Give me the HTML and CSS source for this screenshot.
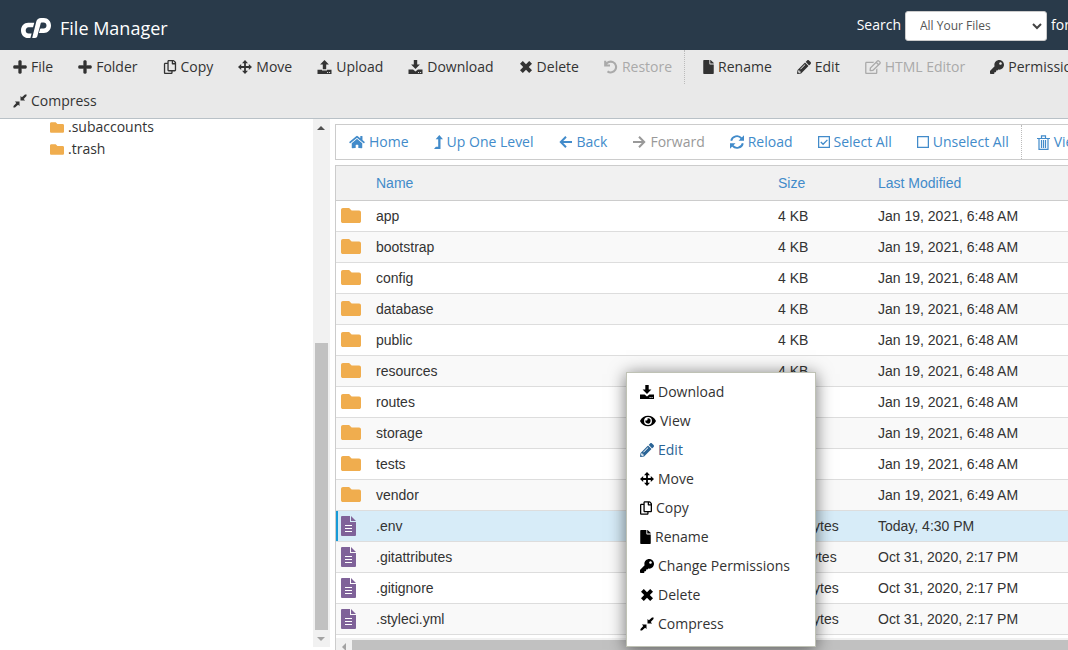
FILE: index.html
```html
<!DOCTYPE html>
<html lang="en">
<head>
<meta charset="utf-8">
<title>File Manager</title>
<link rel="stylesheet" href="styles.css">
</head>
<body>
<svg class="sprite" aria-hidden="true">
  <symbol id="plus" viewBox="-16 16 480 480"><path d="M416 208H272V64c0-17.67-14.33-32-32-32h-32c-17.67 0-32 14.33-32 32v144H32c-17.67 0-32 14.33-32 32v32c0 17.67 14.33 32 32 32h144v144c0 17.67 14.33 32 32 32h32c17.67 0 32-14.33 32-32V304h144c17.67 0 32-14.33 32-32v-32c0-17.67-14.33-32-32-32z" stroke="currentColor" stroke-width="16"/></symbol>
  <symbol id="copy" viewBox="0 0 448 512"><path d="M433.941 65.941l-51.882-51.882A48 48 0 0 0 348.118 0H176c-26.51 0-48 21.49-48 48v48H48c-26.51 0-48 21.49-48 48v320c0 26.51 21.49 48 48 48h224c26.51 0 48-21.49 48-48v-48h80c26.51 0 48-21.49 48-48V99.882a48 48 0 0 0-14.059-33.941zM266 464H54a6 6 0 0 1-6-6V150a6 6 0 0 1 6-6h74v224c0 26.51 21.49 48 48 48h96v42a6 6 0 0 1-6 6zm128-96H182a6 6 0 0 1-6-6V54a6 6 0 0 1 6-6h106v88c0 13.255 10.745 24 24 24h88v202a6 6 0 0 1-6 6zm6-256h-64V48h9.632c1.591 0 3.117.632 4.243 1.757l48.368 48.368a6 6 0 0 1 1.757 4.243V112z"/></symbol>
  <symbol id="move" viewBox="0 0 14 14"><path d="M7 0l3 3.2H7.9v2.9h2.9V4L14 7l-3.2 3V7.9H7.9v2.9H10L7 14l-3-3.2h2.1V7.9H3.2V10L0 7l3.2-3v2.1h2.9V3.2H4z"/></symbol>
  <symbol id="upload" viewBox="0 0 14 14"><path d="M7 0l4.400 4.600H8.700v4.700H5.300V4.600H2.600zM0 9.800h4.500v.8h5v-.8H14V14H0zM9.600 12v1h1v-1zm2 0v1h1v-1z" fill-rule="evenodd"/></symbol>
  <symbol id="download" viewBox="0 0 14 14"><path d="M5.300 0h3.400v4.400h2.700L7 9 2.600 4.400h2.700zM0 9.400h4.600L7 11.400l2.400-2H14V14H0zM9.600 12v1h1v-1zm2 0v1h1v-1z" fill-rule="evenodd"/></symbol>
  <symbol id="delete" viewBox="0 0 14 14"><path d="M1 3.800L3.800 1 7 4.200 10.200 1 13 3.800 9.800 7l3.200 3.200-2.800 2.800L7 9.800 3.800 13 1 10.200 4.200 7z"/></symbol>
  <symbol id="restore" viewBox="0 0 14 14"><path d="M1.200 .8v4.700H6M1.600 5.200A5.400 5.400 0 1 1 3.500 11.400" fill="none" stroke="currentColor" stroke-width="2.100"/></symbol>
  <symbol id="file" viewBox="0 0 384 512"><path d="M224 136V0H24C10.700 0 0 10.700 0 24v464c0 13.300 10.700 24 24 24h336c13.300 0 24-10.700 24-24V160H248c-13.200 0-24-10.800-24-24zm160-14.100v6.100H256V0h6.100c6.400 0 12.500 2.500 17 7l97.900 98c4.500 4.500 7 10.600 7 16.900z"/></symbol>
  <symbol id="doc" viewBox="0 0 15 20"><path d="M1 0h8v6h6v13a1 1 0 0 1-1 1H1a1 1 0 0 1-1-1V1a1 1 0 0 1 1-1zm9 0l5 5h-5z"/><path d="M4 9.500h7M4 12.500h7M4 15.500h7" stroke="#fff" stroke-width="1"/></symbol>
  <symbol id="pencil" viewBox="0 0 512 512"><path fill-rule="evenodd" d="M497.900 142.100l-46.100 46.100c-4.700 4.700-12.300 4.700-17 0l-111-111c-4.700-4.700-4.700-12.300 0-17l46.100-46.100c18.700-18.700 49.100-18.700 67.900 0l60.100 60.100c18.800 18.700 18.800 49.100 0 67.900zM284.200 99.800L21.600 362.400.4 483.900c-2.900 16.400 11.400 30.600 27.800 27.800l121.500-21.300 262.600-262.600c4.700-4.700 4.700-12.300 0-17l-111-111c-4.800-4.700-12.400-4.700-17.100 0zM124.100 339.900c-5.500-5.500-5.500-14.300 0-19.800l154-154c5.500-5.500 14.300-5.500 19.800 0s5.500 14.300 0 19.800l-154 154c-5.500 5.500-14.300 5.500-19.800 0zM88 424h48v36.300l-64.500 11.300-31.100-31.100L51.700 376H88v48z"/></symbol>
  <symbol id="edit" viewBox="0 0 576 512"><path d="M402.300 344.900l32-32c5-5 13.700-1.500 13.700 5.700V464c0 26.500-21.500 48-48 48H48c-26.500 0-48-21.500-48-48V112c0-26.500 21.500-48 48-48h273.500c7.100 0 10.700 8.600 5.700 13.700l-32 32c-1.500 1.500-3.500 2.300-5.700 2.300H48v352h352V350.500c0-2.100.8-4.100 2.300-5.600zm156.600-201.800L296.300 405.700l-90.400 10c-26.200 2.900-48.500-19.200-45.600-45.600l10-90.400L432.900 17.100c22.900-22.900 59.900-22.900 82.700 0l43.200 43.200c22.900 22.900 22.900 60 .1 82.800zM460.100 174L402 115.900 216.200 301.800l-7.300 65.300 65.300-7.300L460.100 174zm64.800-79.700l-43.200-43.200c-4.100-4.100-10.800-4.100-14.800 0L436 82l58.100 58.100 30.900-30.900c4-4.200 4-10.800-.1-14.900z"/></symbol>
  <symbol id="key" viewBox="0 0 512 512"><path d="M512 176.001C512 273.203 433.202 352 336 352c-11.220 0-22.190-1.062-32.827-3.069l-24.012 27.014A23.999 23.999 0 0 1 261.223 384H224v40c0 13.255-10.745 24-24 24h-40v40c0 13.255-10.745 24-24 24H24c-13.255 0-24-10.745-24-24v-78.059c0-6.365 2.529-12.470 7.029-16.971l161.802-161.802C163.108 213.814 160 195.271 160 176 160 78.798 238.797.001 335.999 0 433.488-.001 512 78.511 512 176.001zM336 128c0 26.510 21.490 48 48 48s48-21.490 48-48-21.490-48-48-48-48 21.490-48 48z"/></symbol>
  <symbol id="compress" viewBox="0 0 14 14"><path d="M7.500 1.900v4.600h4.600l-1.400-1.400L13.500 2l.1-1.500L12 .4 8.900 3.300zM6.500 12.100V7.500H1.900l1.400 1.400L.5 12l-.1 1.500 1.600.1 3.100-2.900z"/></symbol>
  <symbol id="folder" viewBox="0 64 512 384"><path d="M464 128H272l-64-64H48C21.490 64 0 85.490 0 112v288c0 26.510 21.490 48 48 48h416c26.510 0 48-21.490 48-48V176c0-26.510-21.490-48-48-48z"/></symbol>
  <symbol id="home" viewBox="0 0 576 512"><path d="M280.370 148.260L96 300.110V464a16 16 0 0 0 16 16l112.060-.29a16 16 0 0 0 15.920-16V368a16 16 0 0 1 16-16h64a16 16 0 0 1 16 16v95.640a16 16 0 0 0 16 16.050L464 480a16 16 0 0 0 16-16V300L295.670 148.260a12.190 12.190 0 0 0-15.300 0zM571.600 251.470L488 182.560V44.050a12 12 0 0 0-12-12h-56a12 12 0 0 0-12 12v72.610L318.470 43a48 48 0 0 0-61 0L4.340 251.470a12 12 0 0 0-1.600 16.900l25.500 31A12 12 0 0 0 45.150 301l235.220-193.740a12.190 12.190 0 0 1 15.300 0L530.900 301a12 12 0 0 0 16.900-1.600l25.500-31a12 12 0 0 0-1.700-16.930z"/></symbol>
  <symbol id="up" viewBox="0 0 9 14"><path d="M5.300 0L9 4.300H6.500V14H0l1.900-2.200h2.300V4.300H1.700z"/></symbol>
  <symbol id="back" viewBox="0 0 14 14"><path d="M7 1.800L1.800 7 7 12.200M2 7h11" fill="none" stroke="currentColor" stroke-width="2"/></symbol>
  <symbol id="forward" viewBox="0 0 14 14"><path d="M7 1.800L12.200 7 7 12.200M12 7H1" fill="none" stroke="currentColor" stroke-width="2"/></symbol>
  <symbol id="reload" viewBox="0 0 14 14"><path d="M1.200 5.800A5.900 5.900 0 0 1 11.500 3.300M12.800 8.200A5.900 5.900 0 0 1 2.500 10.700" fill="none" stroke="currentColor" stroke-width="1.900"/><path d="M14 .3v5.500H8.500zM0 13.700V8.200h5.500z"/></symbol>
  <symbol id="checked" viewBox="0 0 12 12"><path d="M.6 .6h10.800v10.800H.6zM2.800 6l2.300 2.300 4.300-4.400" fill="none" stroke="currentColor" stroke-width="1.300"/></symbol>
  <symbol id="unchecked" viewBox="0 0 12 12"><path d="M.6 .6h10.800v10.800H.6z" fill="none" stroke="currentColor" stroke-width="1.300"/></symbol>
  <symbol id="trash" viewBox="0 0 13 15"><path d="M0 3.500h13M4.500 3V.8h4V3M2 4v10.300h9V4M4.500 5v8M6.500 5v8M8.500 5v8" fill="none" stroke="currentColor" stroke-width="1.200"/></symbol>
  <symbol id="eye" viewBox="0 0 576 512"><path d="M572.520 241.400C518.290 135.590 410.930 64 288 64S57.680 135.640 3.480 241.410a32.350 32.350 0 0 0 0 29.190C57.710 376.410 165.070 448 288 448s230.320-71.640 284.520-177.410a32.350 32.350 0 0 0 0-29.190zM288 400a144 144 0 1 1 144-144 143.930 143.930 0 0 1-144 144zm0-240a95.310 95.310 0 0 0-25.310 3.790 47.850 47.850 0 0 1-66.900 66.900A95.780 95.780 0 1 0 288 160z"/></symbol>
</svg>

<header class="header">
  <svg class="logo" viewBox="0 0 30 20" role="img" aria-label="cPanel"><path d="M13.300 4.800H7.200C3 4.800 0 8.200 0 12.400 0 16.700 3 20 7.200 20h2.200l1.200-4.500H7.600c-1.700 0-2.900-1.300-2.900-3.100 0-1.700 1.200-3.100 2.900-3.100h3.800c.4 0 .7-.2.800-.6zM11.200 20L15.300 3.500C15.900 1.300 17.700 0 19.900 0h3C27 0 30 3.300 30 7.500S27 15 22.900 15h-5l1.100-3.800c.1-.5.500-.7.900-.7h2.700c1.700 0 2.900-1.300 2.900-3s-1.200-3-2.900-3h-2c-.4 0-.7.200-.8.600L16.300 18.300c-.3 1.100-1.100 1.700-2.200 1.700z"/></svg>
  <h1 class="title">File Manager</h1>
  <form class="search">
    <label for="scope">Search</label>
    <select id="scope" class="scope"><option>All Your Files</option></select>
    <span class="search-for">for</span>
  </form>
</header>

<div class="toolbar">
  <div class="tools">
    <button class="tool"><svg class="icon"><use href="#plus"/></svg>File</button>
    <button class="tool"><svg class="icon"><use href="#plus"/></svg>Folder</button>
    <button class="tool"><svg class="icon"><use href="#copy"/></svg>Copy</button>
    <button class="tool"><svg class="icon"><use href="#move"/></svg>Move</button>
    <button class="tool"><svg class="icon tray"><use href="#upload"/></svg>Upload</button>
    <button class="tool"><svg class="icon tray"><use href="#download"/></svg>Download</button>
    <button class="tool"><svg class="icon"><use href="#delete"/></svg>Delete</button>
    <button class="tool" disabled><svg class="icon"><use href="#restore"/></svg>Restore</button>
    <button class="tool divided"><svg class="icon narrow"><use href="#file"/></svg>Rename</button>
    <button class="tool"><svg class="icon"><use href="#pencil"/></svg>Edit</button>
    <button class="tool" disabled><svg class="icon wide"><use href="#edit"/></svg>HTML Editor</button>
    <button class="tool"><svg class="icon"><use href="#key"/></svg>Permissions</button>
  </div>
  <div class="tools">
    <button class="tool"><svg class="icon"><use href="#compress"/></svg>Compress</button>
  </div>
</div>

<main class="main">
  <aside class="sidebar">
    <ul class="tree">
      <li><svg class="tree-icon"><use href="#folder"/></svg>.subaccounts</li>
      <li><svg class="tree-icon"><use href="#folder"/></svg>.trash</li>
    </ul>
    <div class="vscroll" aria-hidden="true">
      <span class="arrow arrow-up"></span>
      <div class="vtrack"><div class="vthumb"></div></div>
      <span class="arrow arrow-down"></span>
    </div>
  </aside>

  <section class="content">
    <nav class="tools nav">
      <button class="tool"><svg class="icon wide"><use href="#home"/></svg>Home</button>
      <button class="tool"><svg class="icon slim"><use href="#up"/></svg>Up One Level</button>
      <button class="tool"><svg class="icon"><use href="#back"/></svg>Back</button>
      <button class="tool" disabled><svg class="icon"><use href="#forward"/></svg>Forward</button>
      <button class="tool"><svg class="icon"><use href="#reload"/></svg>Reload</button>
      <button class="tool"><svg class="icon box"><use href="#checked"/></svg>Select All</button>
      <button class="tool"><svg class="icon box"><use href="#unchecked"/></svg>Unselect All</button>
      <button class="tool divided"><svg class="icon trash"><use href="#trash"/></svg>View Trash</button>
    </nav>

    <div class="files">
      <table class="table">
        <colgroup><col class="col-icon"><col class="col-name"><col class="col-size"><col></colgroup>
        <thead><tr><th></th><th>Name</th><th>Size</th><th>Last Modified</th></tr></thead>
        <tbody>
          <tr><td><svg class="folder"><use href="#folder"/></svg></td><td>app</td><td>4 KB</td><td>Jan 19, 2021, 6:48 AM</td></tr>
          <tr><td><svg class="folder"><use href="#folder"/></svg></td><td>bootstrap</td><td>4 KB</td><td>Jan 19, 2021, 6:48 AM</td></tr>
          <tr><td><svg class="folder"><use href="#folder"/></svg></td><td>config</td><td>4 KB</td><td>Jan 19, 2021, 6:48 AM</td></tr>
          <tr><td><svg class="folder"><use href="#folder"/></svg></td><td>database</td><td>4 KB</td><td>Jan 19, 2021, 6:48 AM</td></tr>
          <tr><td><svg class="folder"><use href="#folder"/></svg></td><td>public</td><td>4 KB</td><td>Jan 19, 2021, 6:48 AM</td></tr>
          <tr><td><svg class="folder"><use href="#folder"/></svg></td><td>resources</td><td>4 KB</td><td>Jan 19, 2021, 6:48 AM</td></tr>
          <tr><td><svg class="folder"><use href="#folder"/></svg></td><td>routes</td><td>4 KB</td><td>Jan 19, 2021, 6:48 AM</td></tr>
          <tr><td><svg class="folder"><use href="#folder"/></svg></td><td>storage</td><td>4 KB</td><td>Jan 19, 2021, 6:48 AM</td></tr>
          <tr><td><svg class="folder"><use href="#folder"/></svg></td><td>tests</td><td>4 KB</td><td>Jan 19, 2021, 6:48 AM</td></tr>
          <tr><td><svg class="folder"><use href="#folder"/></svg></td><td>vendor</td><td>4 KB</td><td>Jan 19, 2021, 6:49 AM</td></tr>
          <tr class="selected"><td><svg class="doc"><use href="#doc"/></svg></td><td>.env</td><td>863 bytes</td><td>Today, 4:30 PM</td></tr>
          <tr><td><svg class="doc"><use href="#doc"/></svg></td><td>.gitattributes</td><td>111 bytes</td><td>Oct 31, 2020, 2:17 PM</td></tr>
          <tr><td><svg class="doc"><use href="#doc"/></svg></td><td>.gitignore</td><td>191 bytes</td><td>Oct 31, 2020, 2:17 PM</td></tr>
          <tr><td><svg class="doc"><use href="#doc"/></svg></td><td>.styleci.yml</td><td>181 bytes</td><td>Oct 31, 2020, 2:17 PM</td></tr>
        </tbody>
      </table>
      <div class="hscroll" aria-hidden="true"><span class="arrow arrow-left"></span><div class="hthumb"></div></div>
    </div>
  </section>
</main>

<div class="menu" role="menu">
  <button role="menuitem"><svg class="icon"><use href="#download"/></svg>Download</button>
  <button role="menuitem"><svg class="icon wide"><use href="#eye"/></svg>View</button>
  <button role="menuitem" class="active"><svg class="icon"><use href="#pencil"/></svg>Edit</button>
  <button role="menuitem"><svg class="icon"><use href="#move"/></svg>Move</button>
  <button role="menuitem"><svg class="icon pages"><use href="#copy"/></svg>Copy</button>
  <button role="menuitem"><svg class="icon narrow"><use href="#file"/></svg>Rename</button>
  <button role="menuitem"><svg class="icon"><use href="#key"/></svg>Change Permissions</button>
  <button role="menuitem"><svg class="icon"><use href="#delete"/></svg>Delete</button>
  <button role="menuitem"><svg class="icon"><use href="#compress"/></svg>Compress</button>
</div>
</body>
</html>
```
FILE: styles.css
```css
* { box-sizing: border-box; }

body {
  margin: 0;
  height: 100vh;
  display: flex;
  flex-direction: column;
  overflow: hidden;
  background: #fff;
  color: #333;
  font: 14px/20px "Open Sans", sans-serif;
}

button {
  border: 0;
  padding: 0;
  background: none;
  color: inherit;
  font: inherit;
  white-space: nowrap;
}

.sprite { position: absolute; width: 0; height: 0; }
svg { fill: currentColor; flex: none; }

.icon { width: 14px; height: 14px; }
.icon.narrow { width: 11px; }
.icon.pages { width: 12px; }
.icon.box { width: 12px; height: 12px; }
.icon.tray { width: 15px; }
.icon.wide { width: 16px; }
.icon.slim { width: 9px; }
.icon.trash { width: 13px; height: 15px; }

/* Header */
.header {
  flex: none;
  height: 50px;
  padding-left: 21px;
  display: flex;
  align-items: center;
  overflow: hidden;
  background: #293a4a;
  color: #fff;
}
.logo { width: 30px; height: 20px; margin-top: 6px; }
.title { margin: 6px 0 0 9px; font-size: 18px; line-height: 24px; font-weight: 400; }
.search { margin-left: auto; display: flex; align-items: center; gap: 4px; }
.scope {
  appearance: none;
  width: 142px;
  height: 30px;
  margin-top: 2px;
  padding: 0 14px;
  border: 1px solid #ccc;
  border-radius: 3px;
  background: #fff url("data:image/svg+xml,%3Csvg xmlns='http://www.w3.org/2000/svg' viewBox='0 0 10 7'%3E%3Cpath d='M1 1l4 4 4-4' fill='none' stroke='%23444' stroke-width='2'/%3E%3C/svg%3E") no-repeat right 4px center / 10px 7px;
  color: #555;
  font: 12px/20px "Open Sans", sans-serif;
}
.search-for { width: 17px; overflow: hidden; }

/* Toolbars */
.toolbar {
  flex: none;
  border-bottom: 1px solid #b9c1c7;
  background: #e9e9e9;
}
.tools { display: flex; height: 34px; overflow: hidden; }
.tool {
  flex: none;
  display: flex;
  align-items: center;
  gap: 4px;
  padding: 0 12px 0 13px;
}
.tool:disabled { color: #aaa; }
.tool.divided { border-left: 1px dotted #bbb; padding-left: 18px; }

/* Layout */
.main { flex: 1; min-height: 0; display: flex; }
.sidebar { flex: 0 0 330px; display: flex; }
.tree {
  flex: 1;
  margin: 0;
  padding: 0 0 0 50px;
  list-style: none;
  display: flex;
  flex-direction: column;
  gap: 6px;
  line-height: 16px;
}
.tree li { display: flex; align-items: center; gap: 4px; }
.tree-icon { width: 14px; height: 11px; color: #f0ad4e; }

.vscroll {
  width: 17px;
  margin-bottom: 3px;
  display: flex;
  flex-direction: column;
  background: #f1f1f1;
}
.vtrack { flex: 1; display: flex; align-items: flex-end; padding: 0 2px; }
.vthumb { width: 100%; height: 58%; background: #c1c1c1; }
.arrow { flex: none; width: 16px; height: 17px; display: grid; place-items: center; }
.arrow::before { content: ""; border: 4px solid transparent; }
.arrow-up::before { border-top: 0; border-bottom-color: #505050; }
.arrow-down::before { border-bottom: 0; border-top-color: #a3a3a3; }
.arrow-left::before { border-left: 0; border-right-color: #a3a3a3; }

.content {
  flex: 1;
  min-width: 0;
  padding: 5px 0 0 5px;
  display: flex;
  flex-direction: column;
  gap: 5px;
}
.nav {
  flex: none;
  height: 36px;
  border: 1px solid #ccc;
  border-right: 0;
  color: #428bca;
}
.nav .tool:disabled { color: #999; }
.nav .divided { padding-left: 15px; }

.files {
  flex: 1;
  min-height: 0;
  overflow: hidden;
  border: 1px solid #ccc;
  border-width: 1px 0 0 1px;
}

/* File table */
.table {
  width: 100%;
  table-layout: fixed;
  border-spacing: 0;
  font: 14px/20px "Liberation Sans", Arial, sans-serif;
}
.col-icon { width: 40px; }
.col-name { width: 402px; }
.col-size { width: 100px; }
th {
  height: 35px;
  padding: 0;
  border-bottom: 1px solid #ccc;
  background: #f1f1f1;
  color: #428bca;
  font-weight: 400;
  text-align: left;
}
td { height: 31px; padding: 0; border-bottom: 1px solid #ddd; white-space: nowrap; }
td:first-child { padding-left: 5px; }
td svg { display: block; }
tbody tr:nth-child(even) { background: #f9f9f9; }
tbody .selected { background: #d7ecf8; }
.selected td:first-child { box-shadow: inset 2px 0 #179bd7; }
.folder { width: 20px; height: 15px; margin-bottom: 1px; color: #f0ad4e; }
.doc { width: 15px; height: 20px; color: #7f6299; }

.hscroll { height: 17px; margin-top: 3px; display: flex; align-items: center; background: #f1f1f1; }
.hthumb { flex: 1; height: 13px; background: #c1c1c1; }

/* Context menu */
.menu {
  position: absolute;
  left: 626px;
  top: 372px;
  width: 190px;
  padding: 4px 13px 8px;
  display: flex;
  flex-direction: column;
  border: 1px solid #bfc2b5;
  background: #fff;
  box-shadow: 0 2px 16px rgba(0, 0, 0, .55);
}
.menu button { height: 29px; display: flex; align-items: center; gap: 4px; }
.menu .icon { color: #000; }
.menu .active, .menu .active .icon { color: #2a6496; }
```
